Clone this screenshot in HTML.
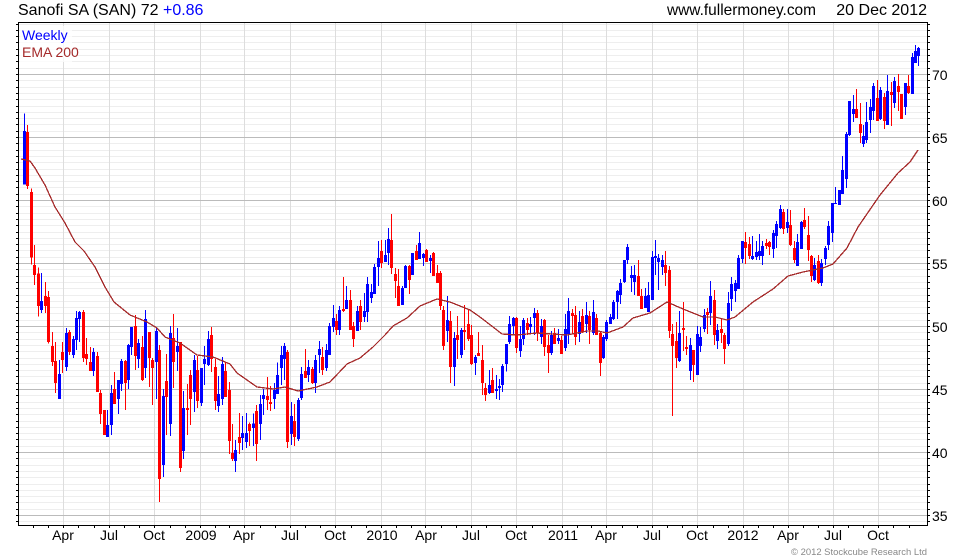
<!DOCTYPE html>
<html><head><meta charset="utf-8"><title>Sanofi SA</title>
<style>html,body{margin:0;padding:0;background:#fff}svg{display:block}text{font-family:"Liberation Sans",Arial,sans-serif}</style></head>
<body>
<svg width="980" height="560" viewBox="0 0 980 560" xmlns="http://www.w3.org/2000/svg">
<rect width="980" height="560" fill="#fff"/>
<g shape-rendering="crispEdges" fill="none">
<defs><path id="mn" d="M19 .5H927M19 6.5H927M19 13.5H927M19 19.5H927M19 25.5H927M19 32.5H927M19 38.5H927M19 44.5H927M19 50.5H927M19 57.5H927"/>
<path id="tk" d="M16 .5h2M16 6.5h2M16 13.5h2M16 19.5h2M16 25.5h2M16 32.5h2M16 38.5h2M16 44.5h2M16 50.5h2M16 57.5h2M928 .5h2M928 6.5h2M928 13.5h2M928 19.5h2M928 25.5h2M928 32.5h2M928 38.5h2M928 44.5h2M928 50.5h2M928 57.5h2"/></defs>
<path stroke="#eee" d="M19 24.5H927M19 30.5H927M19 36.5H927M19 42.5H927M19 49.5H927M19 55.5H927M19 61.5H927M19 68.5H927M19 521.5H927"/>
<g stroke="#eee"><use href="#mn" y="74"/><use href="#mn" y="137"/><use href="#mn" y="200"/><use href="#mn" y="263"/><use href="#mn" y="326"/><use href="#mn" y="389"/><use href="#mn" y="452"/></g>
<path stroke="#ddd" d="M63.5 23V525M109.5 23V525M154.5 23V525M200.5 23V525M244.5 23V525M290.5 23V525M335.5 23V525M381.5 23V525M425.5 23V525M471.5 23V525M516.5 23V525M562.5 23V525M606.5 23V525M652.5 23V525M697.5 23V525M743.5 23V525M788.5 23V525M833.5 23V525M878.5 23V525"/>
<path stroke="#bbb" d="M19 74.5H927M19 137.5H927M19 200.5H927M19 263.5H927M19 326.5H927M19 389.5H927M19 452.5H927M19 515.5H927"/>

<g transform="translate(10 100) scale(.33333)">
<path stroke="#00f" stroke-width="3" d="M43 40V254M95 519V639M148 780V897M169 684V813M190 708V774M200 633V750M208 633V726M250 744V828M292 930V1011M304 855V1005M325 840V942M334 777V873M355 732V867M364 681V765M385 717V804M406 630V834M439 681V897M460 867V1131M481 678V1008M502 684V813M520 873V1077M553 765V936M574 804V918M583 738V855M595 693V798M625 828V936M637 771V915M676 1020V1116M697 948V1050M709 939V1044"/>
<path stroke="#00f" stroke-width="9" d="M43 93V254M95 603V630M148 822V897M169 699V801M190 717V765M200 654V720M208 636V657M250 756V813M292 975V1011M304 879V975M325 840V897M334 783V852M355 735V840M364 681V741M385 729V777M406 657V804M439 693V786M460 888V1095M481 699V972M502 738V756M520 924V1053M553 780V876M574 804V909M583 777V792M595 717V795M625 882V918M637 792V897M676 1050V1083M697 999V1014M709 999V1026"/>
<path stroke="#f00" stroke-width="3" d="M53 75V267M64 265V494M74 435V555M85 502V650M106 546V639M116 573V730M127 696V798M137 726V879M158 726V819M179 690V765M220 630V786M229 714V795M241 741V813M262 756V876M271 870V972M283 930V1005M313 816V912M346 780V930M376 645V810M397 708V843M418 696V861M427 774V915M448 735V1206M469 762V1005M490 642V864M511 726V1116M532 852V1005M541 810V975M562 768V924M604 681V816M616 777V930M646 786V891M658 846V1062M667 972V1083M688 939V1062"/>
<path stroke="#f00" stroke-width="9" d="M53 96V258M64 276V473M74 495V525M85 521V618M106 588V618M116 591V726M127 738V786M137 783V849M158 756V780M179 696V756M220 636V774M229 762V777M241 786V813M262 768V876M271 879V942M283 930V1005M313 867V912M346 783V849M376 678V768M397 741V840M418 696V774M427 780V804M448 750V1137M469 843V891M490 714V786M511 726V1104M532 924V930M541 825V897M562 810V903M604 705V777M616 801V903M646 813V891M658 870V1023M667 1059V1077M688 1011V1029"/>
</g>

<g transform="translate(230 200) scale(.33333)">
<path stroke="#00f" stroke-width="3" d="M70 640V738M91 585V720M100 567V645M133 549V627M142 487V582M154 438V555M163 429V540M184 606V735M205 594V723M214 501V600M235 480V546M256 465V579M268 423V519M289 432V513M298 369V465M310 315V396M328 318V405M349 258V327M382 318V393M403 279V366M412 231V366M424 252V309M433 192V282M445 123V258M466 120V186M475 84V195M517 258V315M526 195V264M547 159V225M568 96V177M580 159V198M601 165V219M652 288V426M673 396V558M694 384V474"/>
<path stroke="#00f" stroke-width="9" d="M70 670V684M91 612V672M100 585V597M133 570V597M142 525V582M154 465V504M163 438V477M184 648V702M205 600V717M214 522V594M235 501V525M256 480V549M268 447V465M289 450V504M298 378V465M310 354V381M328 330V390M349 300V327M382 333V393M403 333V351M412 252V336M424 276V294M433 201V282M445 174V201M466 165V186M475 117V159M517 264V315M526 198V264M547 159V225M568 129V177M580 162V174M601 174V183M652 360V393M673 414V501M694 390V465"/>
<path stroke="#f00" stroke-width="3" d="M58 667V738M79 615V783M112 531V630M121 558V633M172 450V744M193 612V738M226 447V534M247 501V552M277 441V525M319 342V405M340 231V336M361 270V390M370 366V441M391 300V390M454 120V204M484 42V222M496 204V294M505 207V318M538 195V282M559 135V180M589 147V186M610 156V228M622 195V249M631 213V330M640 318V450M661 333V549M682 348V477M703 315V450M715 327V423"/>
<path stroke="#f00" stroke-width="9" d="M58 672V693M79 633V732M112 588V600M121 606V612M172 456V726M193 663V711M226 513V534M247 507V549M277 471V510M319 363V390M340 327V333M361 300V390M370 378V417M391 318V366M454 153V189M484 120V204M496 222V243M505 258V318M538 198V240M559 153V180M589 150V186M610 159V228M622 219V249M631 219V318M640 330V438M661 363V501M682 405V420M703 390V396M715 372V417"/>
</g>

<g transform="translate(460 220) scale(.33333)">
<path stroke="#00f" stroke-width="3" d="M46 405V465M88 450V522M109 465V537M118 477V540M127 432V516M139 372V455M148 288V372M160 291V345M181 318V411M190 294V375M211 291V342M223 264V345M244 297V372M274 333V405M295 327V372M316 282V393M325 234V372M358 273V366M379 246V339M400 240V345M430 345V417M439 300V363M451 282V312M460 240V300M472 210V297M481 177V252M493 120V189M502 72V132M514 138V216M523 135V225M556 204V264M565 186V276M577 93V240M586 60V165M595 102V210M607 105V165M658 273V426M691 354V480M712 318V465"/>
<path stroke="#00f" stroke-width="9" d="M46 411V429M88 495V519M109 507V513M118 498V504M127 438V495M139 372V432M148 312V366M160 294V318M181 357V393M190 300V357M211 312V321M223 279V294M244 318V351M274 345V399M295 354V363M316 327V384M325 273V342M358 306V342M379 285V312M400 276V339M430 351V414M439 306V357M451 291V312M460 246V297M472 213V246M481 189V225M493 120V186M502 81V120M514 165V174M523 165V186M556 228V264M565 225V276M577 111V240M586 108V114M595 114V126M607 120V141M658 339V423M691 375V453M712 342V465"/>
<path stroke="#f00" stroke-width="3" d="M34 315V435M55 336V408M67 375V525M76 489V543M97 444V519M169 291V399M202 294V345M232 270V363M253 297V408M265 345V459M283 324V372M304 348V402M337 267V342M346 258V375M367 267V339M388 273V372M409 282V345M421 333V468M535 120V228M544 207V267M616 93V198M628 138V354M637 312V588M649 306V444M670 246V393M679 348V405M700 390V486"/>
<path stroke="#f00" stroke-width="9" d="M34 345V432M55 399V408M67 420V489M76 504V525M97 480V519M169 294V384M202 309V330M232 279V339M253 300V381M265 375V399M283 339V372M304 360V402M337 279V288M346 285V351M367 288V336M388 288V330M409 294V345M421 339V429M535 168V228M544 228V267M616 135V159M628 150V333M637 342V378M649 363V414M670 324V330M679 381V387M700 390V435"/>
</g>

<g transform="translate(690 30) scale(.33333)">
<path stroke="#00f" stroke-width="3" d="M31 891V966M43 837V906M61 753V885M82 882V957M115 786V948M124 741V843M136 750V816M145 675V777M157 633V699M187 618V690M199 633V690M208 612V690M217 633V705M250 600V684M259 573V654M271 525V597M292 537V609M322 612V708M334 573V657M373 684V753M394 687V768M406 648V705M415 573V660M427 519V636M436 471V522M448 480V525M457 378V492M469 306V474M478 213V318M490 195V276M520 285V351M529 216V339M541 207V309M550 159V270M571 171V270M592 135V285M613 141V234M646 159V255M667 69V192M676 45V99M685 51V108"/>
<path stroke="#00f" stroke-width="9" d="M31 921V948M43 855V897M61 798V849M82 900V933M115 819V942M124 762V807M136 759V783M145 684V777M157 633V687M187 678V687M199 666V681M208 663V678M217 648V678M250 609V657M259 582V618M271 537V594M292 576V594M322 636V708M334 576V657M373 705V750M394 699V759M406 654V687M415 588V645M427 519V609M436 519V522M448 480V525M457 420V492M469 312V447M478 213V315M490 237V252M520 318V342M529 276V330M541 231V270M550 168V243M571 180V267M592 183V285M613 153V219M646 159V231M667 81V192M676 63V99M685 54V78"/>
<path stroke="#f00" stroke-width="3" d="M52 834V912M73 780V945M94 867V939M103 909V1002M166 606V702M178 621V687M229 627V657M238 633V675M280 537V612M301 540V648M313 633V699M343 534V597M355 558V693M364 675V756M385 675V762M499 177V264M511 219V339M562 150V273M583 189V297M604 156V288M625 132V243M634 192V267M655 135V192"/>
<path stroke="#f00" stroke-width="9" d="M52 846V855M73 810V915M94 897V909M103 915V957M166 636V654M178 642V678M229 639V648M238 636V651M280 546V597M301 585V645M313 654V690M343 570V591M355 615V660M364 678V738M385 693V759M499 237V264M511 282V309M562 204V273M583 201V273M604 186V195M625 168V186M634 192V267M655 168V189"/>
</g>

<polyline fill="none" stroke="#a52a2a" stroke-width="1.3" points="21,159 30,161 35,168 45,185 55,207 65,223 75,242 84,251 95,267 105,287 114,302 130,315 147,322 157,328 165,337 180,343 197,355 213,357 230,364 237,373 247,380 257,387 273,389 285,387 298,391 317,387 330,382 347,364 360,358 373,347 385,335 393,326 407,318 420,306 437,299 450,302 470,310 480,317 493,327 502,334 517,335 537,333 567,335 587,331 598,331 607,333 623,327 633,318 650,313 667,302 683,309 703,317 715,317 727,320 735,317 753,302 773,289 788,276 803,272 823,268 833,264 847,248 858,227 880,195 898,173 910,162 918,150"/>

<rect x="20" y="26" width="52" height="36" fill="#fff" opacity=".75"/>
<rect x="18.5" y="22.5" width="909" height="503" stroke="#000"/>
<g stroke="#000"><use href="#tk" y="74"/><use href="#tk" y="137"/><use href="#tk" y="200"/><use href="#tk" y="263"/><use href="#tk" y="326"/><use href="#tk" y="389"/><use href="#tk" y="452"/></g>
<path stroke="#000" d="M16 24.5h2M16 30.5h2M16 36.5h2M16 42.5h2M16 49.5h2M16 55.5h2M16 61.5h2M16 68.5h2M16 515.5h2M16 521.5h2M928 24.5h2M928 30.5h2M928 36.5h2M928 42.5h2M928 49.5h2M928 55.5h2M928 61.5h2M928 68.5h2M928 515.5h2M928 521.5h2M63.5 526v2M109.5 526v2M154.5 526v2M200.5 526v2M244.5 526v2M290.5 526v2M335.5 526v2M381.5 526v2M425.5 526v2M471.5 526v2M516.5 526v2M562.5 526v2M606.5 526v2M652.5 526v2M697.5 526v2M743.5 526v2M788.5 526v2M833.5 526v2M878.5 526v2M33.5 526v2M48.5 526v2M78.5 526v2M94.5 526v2M124.5 526v2M139.5 526v2M170.5 526v2M185.5 526v2M215.5 526v2M229.5 526v2M260.5 526v2M275.5 526v2M305.5 526v2M320.5 526v2M351.5 526v2M366.5 526v2M396.5 526v2M411.5 526v2M441.5 526v2M456.5 526v2M486.5 526v2M501.5 526v2M532.5 526v2M547.5 526v2M577.5 526v2M591.5 526v2M622.5 526v2M637.5 526v2M667.5 526v2M682.5 526v2M713.5 526v2M728.5 526v2M758.5 526v2M773.5 526v2M803.5 526v2M818.5 526v2M848.5 526v2M863.5 526v2M893.5 526v2M909.5 526v2"/>
</g>

<text x="18" y="15" font-size="16" fill="#000">Sanofi SA (SAN) 72 <tspan fill="#00f">+0.86</tspan></text>
<text x="667" y="15" font-size="16" fill="#000" textLength="149" lengthAdjust="spacingAndGlyphs">www.fullermoney.com</text>
<text x="927" y="15" font-size="16" fill="#000" text-anchor="end">20 Dec 2012</text>
<text x="22" y="40" font-size="14" fill="#00f">Weekly</text>
<text x="22" y="57" font-size="14" fill="#a52a2a">EMA 200</text>
<g font-size="14" fill="#000">
<text x="932" y="80">70</text><text x="932" y="143">65</text><text x="932" y="206">60</text><text x="932" y="269">55</text><text x="932" y="332">50</text><text x="932" y="395">45</text><text x="932" y="458">40</text><text x="932" y="521">35</text>
</g>
<g font-size="14" fill="#000" text-anchor="middle">
<text x="63" y="540">Apr</text><text x="109" y="540">Jul</text><text x="154" y="540">Oct</text><text x="201" y="540">2009</text><text x="244" y="540">Apr</text><text x="290" y="540">Jul</text><text x="335" y="540">Oct</text><text x="382" y="540">2010</text><text x="426" y="540">Apr</text><text x="471" y="540">Jul</text><text x="516" y="540">Oct</text><text x="563" y="540">2011</text><text x="606" y="540">Apr</text><text x="652" y="540">Jul</text><text x="697" y="540">Oct</text><text x="743" y="540">2012</text><text x="788" y="540">Apr</text><text x="833" y="540">Jul</text><text x="878" y="540">Oct</text>
</g>
<text x="791" y="555" font-size="9.5" fill="#888" textLength="136" lengthAdjust="spacingAndGlyphs">© 2012 Stockcube Research Ltd</text>
</svg>
</body></html>
